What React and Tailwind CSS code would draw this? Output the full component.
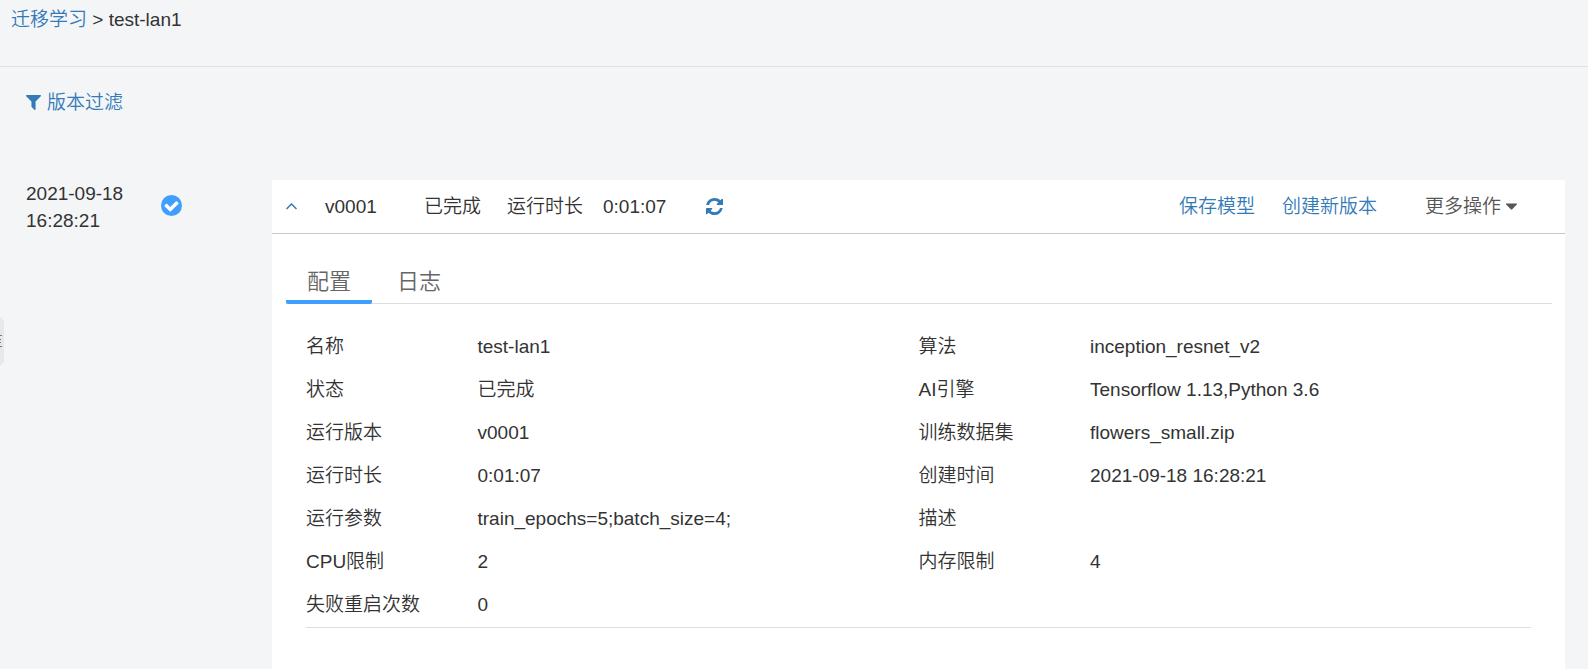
import React, { useState } from 'react';

const leftRows = [
  ['名称', 'test-lan1'],
  ['状态', '已完成'],
  ['运行版本', 'v0001'],
  ['运行时长', '0:01:07'],
  ['运行参数', 'train_epochs=5;batch_size=4;'],
  ['CPU限制', '2'],
  ['失败重启次数', '0'],
];

const rightRows = [
  ['算法', 'inception_resnet_v2'],
  ['AI引擎', 'Tensorflow 1.13,Python 3.6'],
  ['训练数据集', 'flowers_small.zip'],
  ['创建时间', '2021-09-18 16:28:21'],
  ['描述', ''],
  ['内存限制', '4'],
];

const FilterIcon = () => (
  <svg viewBox="192 256 1408 1408" className="w-[15px] h-[15px]" fill="currentColor" aria-hidden="true">
    <path d="M1595 295q17 41-14 70l-493 493v742q0 42-39 59-13 5-25 5-27 0-45-19l-256-256q-19-19-19-45V858L211 365q-31-29-14-70 17-39 59-39h1280q42 0 59 39z" />
  </svg>
);

const CheckCircleIcon = () => (
  <svg viewBox="0 0 1536 1536" className="w-[21px] h-[21px] text-[#409eff]" fill="currentColor" role="img" aria-label="已完成">
    <path d="M0 768a768 768 0 1 0 1536 0a768 768 0 1 0-1536 0z" />
    <path fill="#fff" d="M1284 606q0-28-18-46l-91-90q-19-19-45-19t-45 19L677 877 451 651q-19-19-45-19t-45 19l-91 90q-18 18-18 46 0 27 18 45l362 362q19 19 45 19 27 0 46-19l543-543q18-18 18-45z" />
  </svg>
);

const RefreshIcon = () => (
  <svg viewBox="0 0 1536 1536" className="w-[17px] h-[17px]" fill="currentColor" aria-hidden="true">
    <path d="M1511 928q0 5-1 7-64 268-268 434.500T764 1536q-146 0-282.500-55T238 1324l-129 129q-19 19-45 19t-45-19-19-45V960q0-26 19-45t45-19h448q26 0 45 19t19 45-19 45l-137 137q71 66 161 102t187 36q134 0 250-65t186-179q11-17 53-117 8-23 30-23h192q13 0 22.500 9.500t9.500 22.500zm25-800v448q0 26-19 45t-45 19h-448q-26 0-45-19t-19-45 19-45l138-138Q969 256 768 256q-134 0-250 65T332 500q-11 17-53 117-8 23-30 23H50q-13 0-22.500-9.500T18 608v-7q65-268 270-434.500T768 0q146 0 284 55.500T1297 212l130-129q19-19 45-19t45 19 19 45z" />
  </svg>
);

const CaretIcon = () => (
  <svg viewBox="384 640 1024 576" className="w-[11px] h-[7px]" fill="currentColor" aria-hidden="true">
    <path d="M1408 704q0 26-19 45l-448 448q-19 19-45 19t-45-19l-448-448q-19-19-19-45t19-45 45-19h896q26 0 45 19t19 45z" />
  </svg>
);

const ConfigList = ({ rows }) => (
  <dl className="flex-1">
    {rows.map(([label, value]) => (
      <div key={label} className="flex h-[43px] items-center">
        <dt className="w-[28%]">{label}</dt>
        <dd>{value}</dd>
      </div>
    ))}
  </dl>
);

const App = () => {
  const [tab, setTab] = useState('config');
  const [open, setOpen] = useState(true);

  return (
    <div className="relative min-h-screen flex flex-col bg-[#f4f5f7] text-[#333] text-[19px] leading-[27px] font-[350] font-['Liberation_Sans','Noto_Sans_CJK_SC',sans-serif]">
      {/* Breadcrumb */}
      <nav className="h-[67px] pt-[6px] pl-[11px] border-b border-[#dfe1e4]">
        <a href="#list" className="text-[#337ab7]">迁移学习</a> &gt; test-lan1
      </nav>

      <div className="pl-[26px] pt-[22px]">
        <button type="button" className="flex items-center gap-[6px] text-[#337ab7]">
          <FilterIcon /> 版本过滤
        </button>
      </div>

      <main className="flex-1 flex items-stretch mt-16 pr-[23px]">
        {/* Timeline column */}
        <div className="w-[272px] shrink-0 flex items-start pl-[26px]">
          <time className="w-[135px] pr-6">2021-09-18 16:28:21</time>
          <div className="pt-[15px]">
            <CheckCircleIcon />
          </div>
        </div>

        <section className="flex-1 bg-white">
          <header className="flex items-center h-[54px] pl-[14px] pr-12 border-b border-[#c8c8c8]">
            <button type="button" aria-label="展开" aria-expanded={open} onClick={() => setOpen(!open)} className="w-[39px] text-[#337ab7]">
              <svg viewBox="0 0 11 7" className="w-[11px] h-[7px]" fill="none" stroke="currentColor" strokeWidth="1.5" aria-hidden="true">
                <path d="M0.500 6 5.500 1l5 5" />
              </svg>
            </button>
            <span className="w-[99px]">v0001</span>
            <span className="w-[83px]">已完成</span>
            <span className="w-24">运行时长</span>
            <span className="w-[103px]">0:01:07</span>
            <button type="button" aria-label="刷新" className="text-[#337ab7]">
              <RefreshIcon />
            </button>
            <div className="ml-auto flex items-center">
              <a href="#save" className="text-[#337ab7]">保存模型</a>
              <a href="#create" className="ml-[27px] text-[#337ab7]">创建新版本</a>
              <button type="button" className="ml-12 flex items-center gap-[5px] text-[#555]">
                更多操作 <CaretIcon />
              </button>
            </div>
          </header>

          {open && (
            <div className="pl-[14px] pr-[13px] pt-[23px]">
              <div role="tablist" className="flex h-[47px] border-b border-[#ddd] text-[22px] text-[#666]">
                <button
                  type="button"
                  role="tab"
                  aria-selected={tab === 'config'}
                  onClick={() => setTab('config')}
                  className={`h-[47px] w-[86px] pt-[6px] border-b-4 rounded-xs ${tab === 'config' ? 'border-[#409eff]' : 'border-transparent'}`}
                >
                  配置
                </button>
                <button
                  type="button"
                  role="tab"
                  aria-selected={tab === 'log'}
                  onClick={() => setTab('log')}
                  className={`ml-1 h-[47px] w-[86px] pt-[6px] border-b-4 rounded-xs ${tab === 'log' ? 'border-[#409eff]' : 'border-transparent'}`}
                >
                  日志
                </button>
              </div>

              {tab === 'config' && (
                <div className="flex mt-[21px] ml-5 mr-[21px] pb-px border-b border-[#ddd]">
                  <ConfigList rows={leftRows} />
                  <ConfigList rows={rightRows} />
                </div>
              )}
            </div>
          )}
        </section>
      </main>

      {/* Collapsed side menu handle */}
      <button type="button" aria-label="菜单" className="absolute left-0 top-[317px] w-1 h-[49px]">
        <svg viewBox="0 0 4 49" className="w-1 h-[49px]" aria-hidden="true">
          <path d="M0 0l4 4v41l-4 4z" fill="#e8e8e8" />
          <path d="M0 18.500h2M0 22.500h1M0 25.500h1M0 29.500h2" stroke="#777" strokeWidth="1" />
        </svg>
      </button>
    </div>
  );
};

export default App;
